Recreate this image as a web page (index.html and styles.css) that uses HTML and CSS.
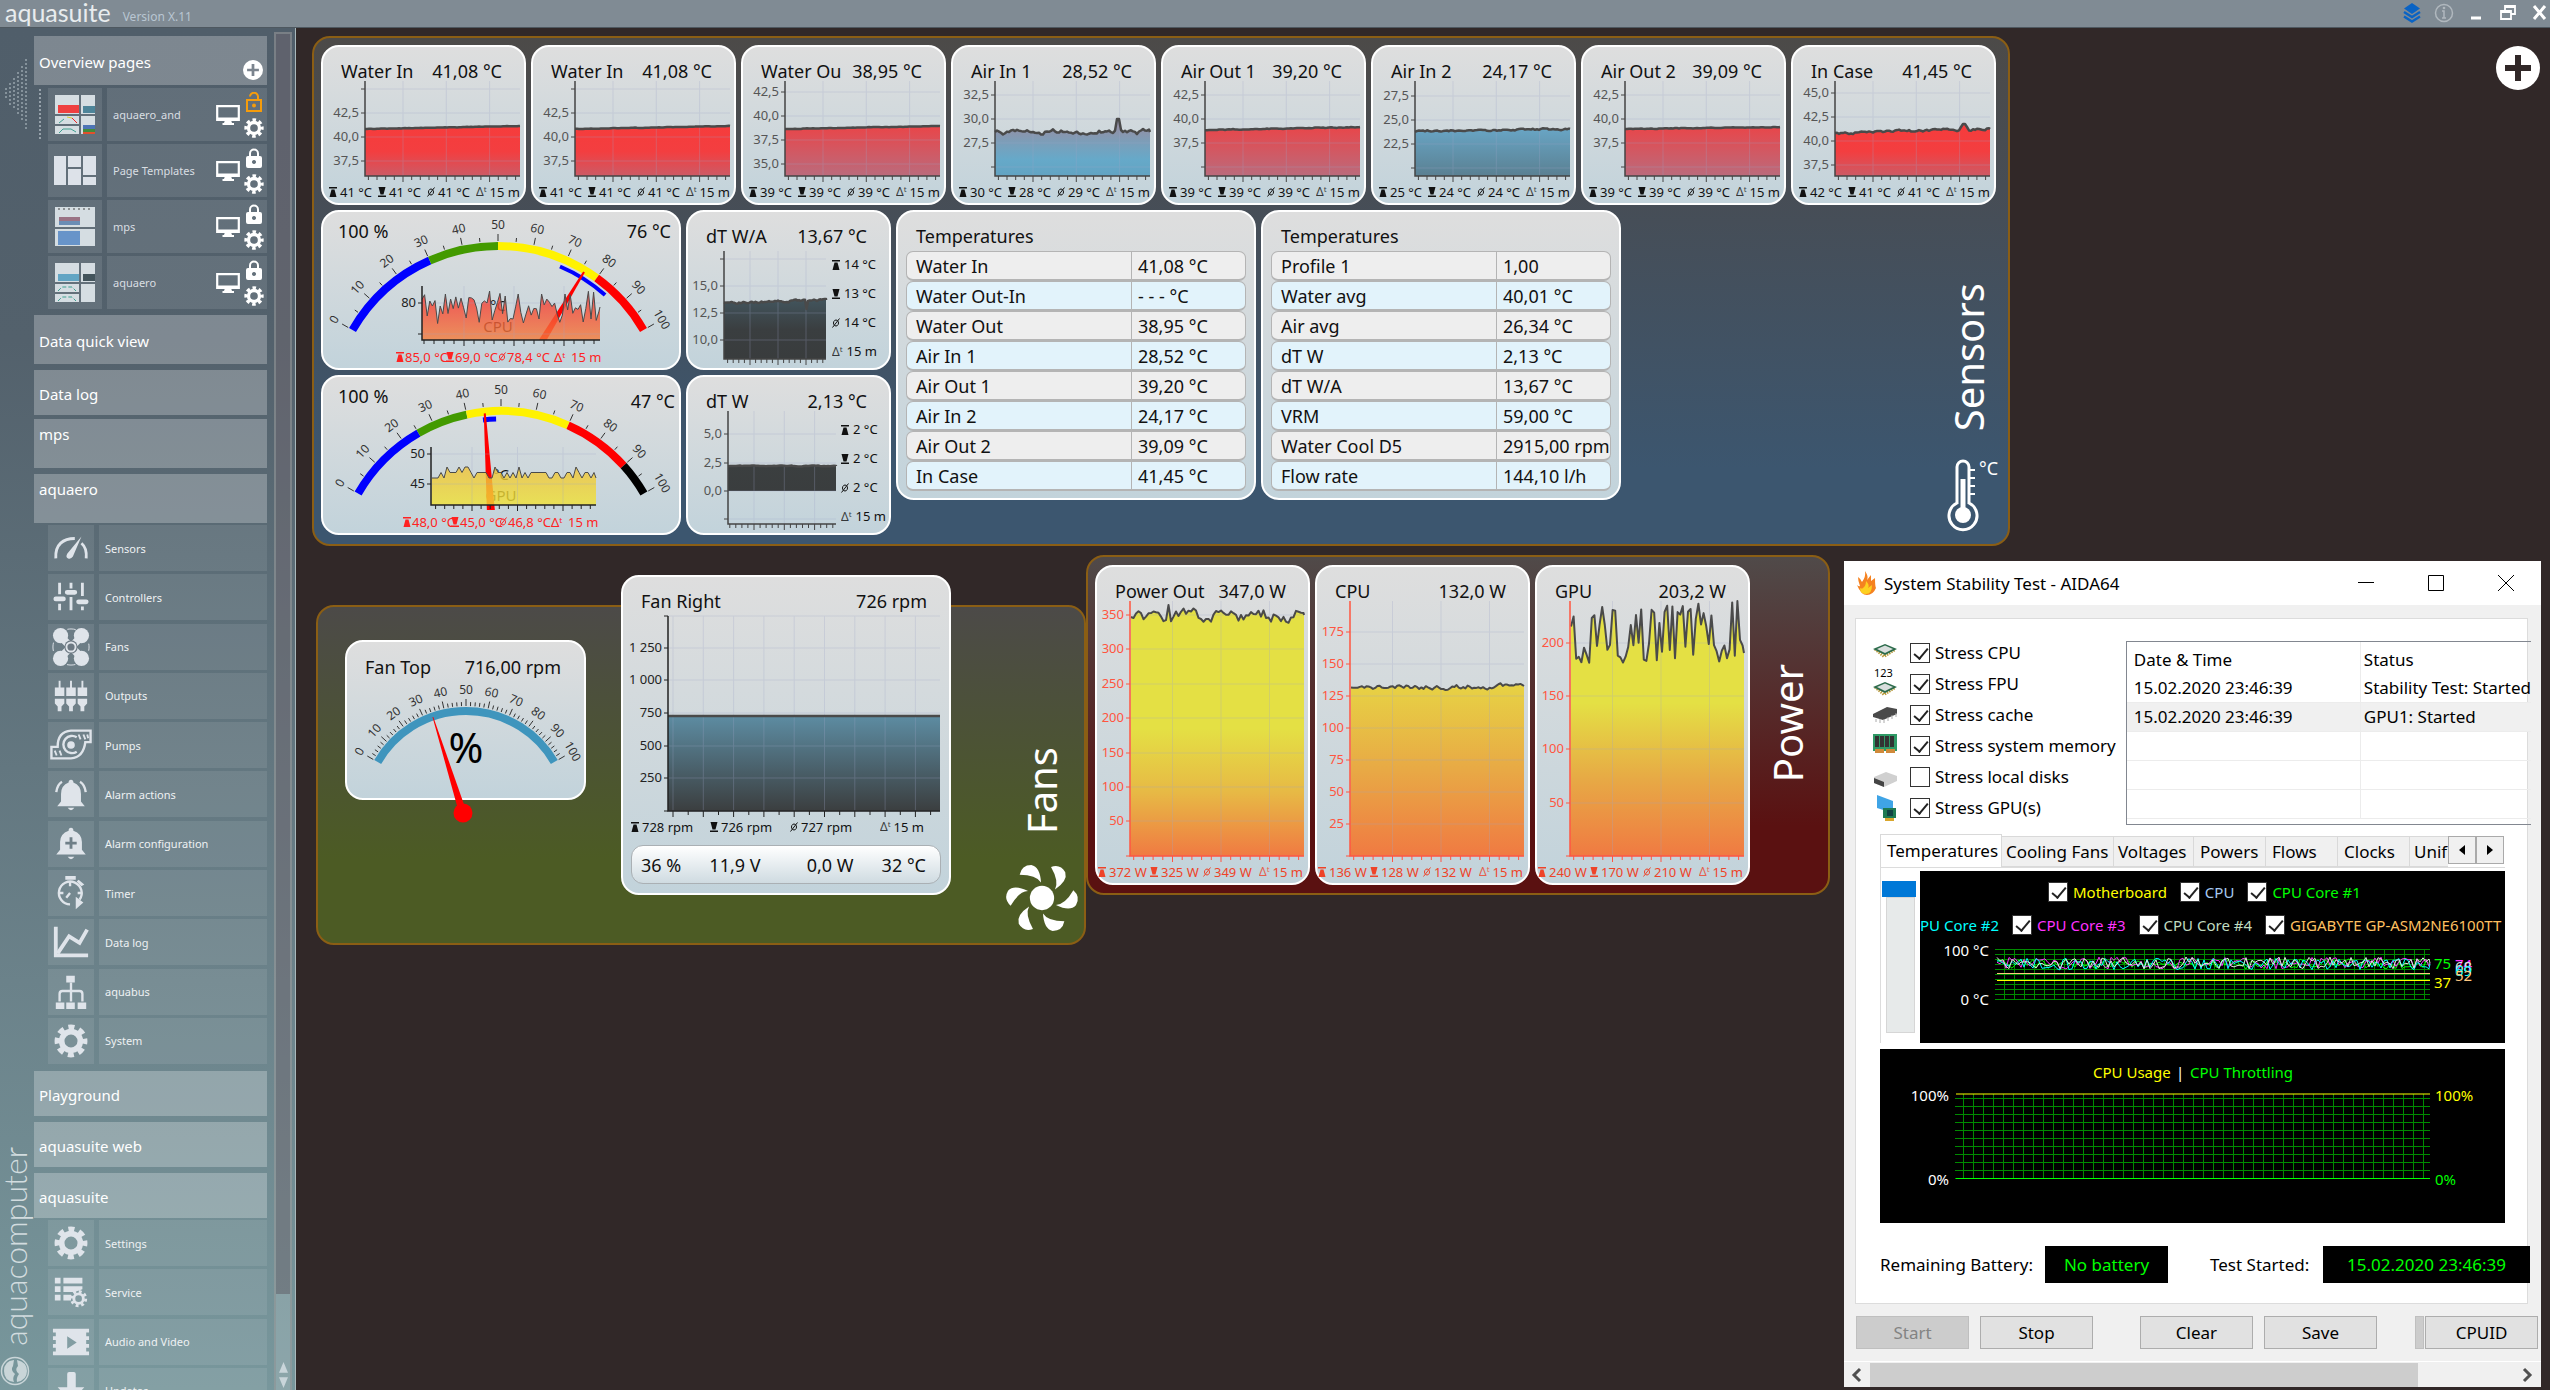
FILE: index.html
```html
<!DOCTYPE html>
<html lang="en">
<head>
<meta charset="utf-8">
<title>aquasuite</title>
<link rel="stylesheet" href="styles.css">
</head>
<body>
<svg class="defs" aria-hidden="true">
  <symbol id="i-gear" viewBox="-12 -12 24 24"><circle r="6.6" fill="none" stroke="currentColor" stroke-width="4"/><circle r="9.6" fill="none" stroke="currentColor" stroke-width="4" stroke-dasharray="4.2 3.34" stroke-dashoffset="2.1"/></symbol>
  <symbol id="i-plus" viewBox="0 0 44 44"><circle cx="22" cy="22" r="22" fill="#fff"/><path d="M22 9v26M9 22h26" stroke="var(--cut)" stroke-width="6"/></symbol>
  <symbol id="i-monitor" viewBox="0 0 24 20"><path d="M1.2 1.2h21.6v13.6H1.2z" fill="none" stroke="currentColor" stroke-width="2.2"/><path d="M2 12.5h20V15H2zM9 15h6l1 3h2v2H6.500v-2H8z" fill="currentColor"/></symbol>
  <symbol id="i-lock" viewBox="0 0 16 20"><path d="M4 9V5.500a4 4 0 0 1 8 0V9" fill="none" stroke="currentColor" stroke-width="2"/><path fill-rule="evenodd" d="M2 8h12q2 0 2 2v8q0 2-2 2H2q-2 0-2-2v-8q0-2 2-2zm6 4a2 2 0 1 0 .01 0z" fill="currentColor"/></symbol>
  <symbol id="i-unlock" viewBox="0 0 16 20"><path d="M4 4.500a4 4 0 0 1 8 .5V8M1 8h14v11H1z" fill="none" stroke="currentColor" stroke-width="2"/><circle cx="8" cy="13.500" r="2" fill="currentColor"/></symbol>
  <symbol id="i-gauge" viewBox="0 0 40 40"><g fill="none" stroke="currentColor" stroke-width="3"><path d="M4 31C3 16 12 10 24 10"/><path d="M31 15q6 5 5 16"/></g><path d="M31 8L22 29q-2 3-5 2t-1-5z" fill="currentColor"/></symbol>
  <symbol id="i-sliders" viewBox="0 0 40 40"><path d="M8 5v12M8 27v7M20 5v6M20 20v14M32 5v14M32 30v4" stroke="currentColor" stroke-width="3"/><path d="M4 22h8M16 15h8M28 25h8" stroke="currentColor" stroke-width="5" stroke-linecap="round"/></symbol>
  <symbol id="i-fan4" viewBox="-20 -20 40 40"><g fill="currentColor"><circle cx="-11" cy="-12" r="8"/><circle cx="11" cy="-12" r="8"/><circle cx="-11" cy="12" r="8"/><circle cx="11" cy="12" r="8"/></g><path d="M-12 -12L12 12M12 -12L-12 12" stroke="currentColor" stroke-width="8"/><circle r="7" fill="#6c7882"/><circle r="4.800" fill="none" stroke="currentColor" stroke-width="2"/><circle r="19" fill="none" stroke="currentColor" stroke-width="1" stroke-dasharray="9 21" stroke-dashoffset="5"/></symbol>
  <symbol id="i-outputs" viewBox="0 0 40 40"><path fill="currentColor" d="M7 4h2v7h4v9H3v-9h4zM3 23h10v5l-3 3v5H6v-5l-3-3zM19 4h2v7h4v9H15v-9h4zM15 23h10v5l-3 3v5h-4v-5l-3-3zM31 4h2v7h4v9H27v-9h4zM27 23h10v5l-3 3v5h-4v-5l-3-3z"/></symbol>
  <symbol id="i-pump" viewBox="0 0 44 34"><g fill="none" stroke="currentColor" stroke-width="2.500"><path d="M42.500 2H22Q8 3 8 19H1.500v12H22q13-1 15-17h5.500z"/><path d="M28 24a9 9 0 1 1 0-15"/></g><circle cx="22" cy="17" r="4" fill="currentColor"/><path d="M30 6l2 5M35 6l2 5M39 6l1 4M5 23l2 5M10 23l2 5" stroke="currentColor" stroke-width="2"/></symbol>
  <symbol id="i-bell" viewBox="0 0 40 40"><path fill="currentColor" d="M20 5q2.500 0 2.500 3 8 3 8 12v8l4 5H5.500l4-5v-8q0-9 8-12 0-3 2.500-3zM16.500 34.500h7q-3.500 5-7 0z"/><path d="M4.500 18q1-8 6-11M35.500 18q-1-8-6-11" fill="none" stroke="currentColor" stroke-width="2.500"/></symbol>
  <symbol id="i-bellplus" viewBox="0 0 40 40"><path fill="currentColor" d="M20 3q2.500 0 2.500 3 9 3 9 12v8l4 5h-31l4-5v-8q0-9 9-12 0-3 2.500-3zM16.500 33.500h7q-3.500 5-7 0z"/><path d="M20 13v12M14 19h12" stroke="#6f7f88" stroke-width="3"/></symbol>
  <symbol id="i-timer" viewBox="0 0 40 40"><g fill="none" stroke="currentColor" stroke-width="2.500"><path d="M29 27a12 12 0 1 0-10 5"/><path d="M19 8v5M8 20h4M27 20h4M19 20l-4 5"/></g><path fill="currentColor" d="M14 2h11v4H14zM28 6l6 5-3 2-5-5zM25 24l8 6-8 7z"/></symbol>
  <symbol id="i-log" viewBox="0 0 40 40"><path d="M4 4v30h34" fill="none" stroke="currentColor" stroke-width="4"/><path d="M6 32l12-18 11 7 8-14" fill="none" stroke="currentColor" stroke-width="4"/></symbol>
  <symbol id="i-bus" viewBox="0 0 40 40"><path fill="currentColor" d="M15 3h9v7h-9zM4 31h9v7H4zM15 31h9v7h-9zM27 31h9v7h-9z"/><path d="M20 10v20M8 30v-8q0-3 3-3h18q3 0 3 3v8" fill="none" stroke="currentColor" stroke-width="2.500"/></symbol>
  <symbol id="i-service" viewBox="0 0 40 40"><path fill="currentColor" d="M3 5h6v6H3zM12 5h20v6H12zM3 14h6v6H3zM12 14h20v3l-8 3H12zM3 23h6v6H3zM12 23h8v6h-8z"/><circle cx="28" cy="27" r="5" fill="none" stroke="currentColor" stroke-width="3"/><circle cx="28" cy="27" r="7.500" fill="none" stroke="currentColor" stroke-width="3" stroke-dasharray="3 2.890"/></symbol>
  <symbol id="i-video" viewBox="0 0 40 30"><path fill="currentColor" fill-rule="evenodd" d="M1 1h38v4h-3v4h3v4h-3v4h3v4h-3v4h3v4H1v-4h3v-4H1v-4h3v-4H1V9h3V5H1zm15 8v13l10-6.500z"/></symbol>
  <symbol id="i-down" viewBox="0 0 40 40"><path fill="currentColor" d="M16 2q0-2 2-2h5q2 0 2 2v14h9L20 32 6 16h10z"/></symbol>
  <symbol id="i-tpl" viewBox="0 0 42 30"><path fill="currentColor" d="M0 0h12v29H0zM14 0h13v11H14zM14 13h13v16H14zM29 0h13v19H29zM29 21h13v8H29z"/></symbol>
  <symbol id="i-chip" viewBox="0 0 24 14"><path d="M2 5l9 7.500 11-7" fill="none" stroke="#b99a3c" stroke-width="3" stroke-dasharray="1.500 1"/><path d="M0 5l12-5 12 5-12 6z" fill="#2c6b4b"/><path d="M4 5l8-3.500L20 5l-8 4z" fill="#d9dedd"/></symbol>
</svg>

<header class="topbar">
  <span class="brand">aquasuite</span><span class="version">Version X.11</span>
  <div class="topbar-tools">
    <button aria-label="Layers"><svg viewBox="0 0 20 20"><path fill="#0a63c4" d="M10 0l8 5.500-8 5.500-8-5.500z"/><path d="M2 9l8 5 8-5M2 13.500l8 5 8-5" fill="none" stroke="#0a63c4" stroke-width="2.400"/></svg></button>
    <button aria-label="Information"><svg viewBox="0 0 20 20"><g fill="none" stroke="#b0b8be" stroke-width="1.500"><circle cx="10" cy="10" r="8.500"/><path d="M8 8h2v7M8 15h4"/></g><circle cx="10" cy="5" r="1.300" fill="#b0b8be"/></svg></button>
    <button aria-label="Minimize"><svg viewBox="0 0 20 20"><path d="M5 15h10" stroke="#fff" stroke-width="3"/></svg></button>
    <button aria-label="Restore"><svg viewBox="0 0 20 20"><path d="M7 7V3h10v8h-4M3 8h10v8H3zM3 9h10M7 4h10" fill="none" stroke="#fff" stroke-width="1.800"/></svg></button>
    <button aria-label="Close"><svg viewBox="0 0 20 20"><path d="M4 3l11 13M15 3L4 16" stroke="#fff" stroke-width="3"/></svg></button>
  </div>
</header>

<div class="shell">
  <aside class="sidebar">
    <div class="rail">
      <svg class="rail-dots" viewBox="0 0 24 72"><path d="M22 1v70M18 8v56M14 14v44M10 20v32M6 25v22M2 30v12" stroke="#85929b" stroke-width="2" stroke-dasharray="2 2"/></svg>
      <div class="rail-logo"><span>aquacomputer</span>
        <svg viewBox="0 0 30 30"><circle cx="15" cy="15" r="13.500" fill="none" stroke="#c9d5d8" stroke-width="1.500"/><path fill="#c9d5d8" d="M14 4Q4 5 4 15t10 11q-2-4 1-8-5-4-2-8zM17 4q10 2 10 11t-10 11q-1-4 2-8-5-4-1-8z"/></svg>
      </div>
    </div>
    <nav class="menu">
      <div class="head head-add"><a href="#overview">Overview pages</a><button aria-label="Add page"><svg><use href="#i-plus"/></svg></button></div>
      <ul class="pages">
        <li class="active"><a class="thumb" href="#p1" aria-label="Open aquaero_and"><svg viewBox="0 0 40 40"><path fill="#d5dde2" d="M0 0h24v19H0zM26 0h14v19H26zM0 21h24v8H0zM0 31h24v8H0zM26 21h14v18H26z"/><path fill="#ef4040" d="M3 10h21v8H3z"/><path fill="#4d8499" d="M28 11h12v7H28z"/><path fill="#4d74b5" d="M28 30h12v4H28z"/><path fill="#438a3c" d="M28 34h12v3H28z"/><path fill="#e2502c" d="M28 37h12v2H28z"/><path d="M4 28l5-4" stroke="#3f9f8f"/><path d="M12 22l5 1" stroke="#dccf33"/><path d="M17 23l5 5" stroke="#e22"/><path d="M4 38l4-4h8l5 3" fill="none" stroke="#3f9f8f"/></svg></a><div class="page"><a href="#p1">aquaero_and</a><button aria-label="Show on desktop"><svg class="mon"><use href="#i-monitor"/></svg></button><span class="duo"><button class="open" aria-label="Lock"><svg class="lock"><use href="#i-unlock"/></svg></button><button aria-label="Settings"><svg class="gear"><use href="#i-gear"/></svg></button></span></div></li>
        <li><a class="thumb" href="#p2" aria-label="Open Page Templates"><svg viewBox="0 0 40 30"><use href="#i-tpl" width="42" height="30" x="-1"/></svg></a><div class="page"><a href="#p2">Page Templates</a><button aria-label="Show on desktop"><svg class="mon"><use href="#i-monitor"/></svg></button><span class="duo"><button aria-label="Unlock"><svg class="lock"><use href="#i-lock"/></svg></button><button aria-label="Settings"><svg class="gear"><use href="#i-gear"/></svg></button></span></div></li>
        <li><a class="thumb" href="#p3" aria-label="Open mps"><svg viewBox="0 0 40 40"><path fill="#d5dde2" d="M0 0h40v20H0zM0 22h40v17H0z"/><path fill="#9a7385" d="M4 10h21v4H4z"/><path fill="#6a8db5" d="M4 14h21v4H4z"/><path fill="#6894c9" d="M3 24h22v14H3z"/><path d="M3 2h34" stroke="#444" stroke-dasharray="2 3"/></svg></a><div class="page"><a href="#p3">mps</a><button aria-label="Show on desktop"><svg class="mon"><use href="#i-monitor"/></svg></button><span class="duo"><button aria-label="Unlock"><svg class="lock"><use href="#i-lock"/></svg></button><button aria-label="Settings"><svg class="gear"><use href="#i-gear"/></svg></button></span></div></li>
        <li><a class="thumb" href="#p4" aria-label="Open aquaero"><svg viewBox="0 0 40 40"><path fill="#d5dde2" d="M0 0h24v19H0zM26 0h14v19H26zM0 21h24v8H0zM0 31h24v8H0zM26 21h14v18H26z"/><path fill="#62a5c4" d="M3 11h21v7H3z"/><path fill="#43545c" d="M28 11h12v7H28z"/><path d="M3 28l4-4h10l4 4M3 38l4-4h10l4 4" fill="none" stroke="#3f9f8f" stroke-dasharray="4 2"/></svg></a><div class="page"><a href="#p4">aquaero</a><button aria-label="Show on desktop"><svg class="mon"><use href="#i-monitor"/></svg></button><span class="duo"><button aria-label="Unlock"><svg class="lock"><use href="#i-lock"/></svg></button><button aria-label="Settings"><svg class="gear"><use href="#i-gear"/></svg></button></span></div></li>
      </ul>
      <a class="head tall" href="#quick">Data quick view</a>
      <a class="head" href="#log">Data log</a>
      <a class="head tall top near" href="#mps">mps</a>
      <a class="head tall top" href="#aquaero">aquaero</a>
      <ul class="subs eleven">
        <li><svg><use href="#i-gauge"/></svg><a href="#sensors">Sensors</a></li>
        <li><svg><use href="#i-sliders"/></svg><a href="#controllers">Controllers</a></li>
        <li><svg><use href="#i-fan4"/></svg><a href="#fans">Fans</a></li>
        <li><svg><use href="#i-outputs"/></svg><a href="#outputs">Outputs</a></li>
        <li><svg class="w"><use href="#i-pump"/></svg><a href="#pumps">Pumps</a></li>
        <li><svg><use href="#i-bell"/></svg><a href="#actions">Alarm actions</a></li>
        <li><svg><use href="#i-bellplus"/></svg><a href="#alarms">Alarm configuration</a></li>
        <li><svg><use href="#i-timer"/></svg><a href="#timer">Timer</a></li>
        <li><svg><use href="#i-log"/></svg><a href="#datalog">Data log</a></li>
        <li><svg><use href="#i-bus"/></svg><a href="#aquabus">aquabus</a></li>
        <li><svg class="g"><use href="#i-gear"/></svg><a href="#system">System</a></li>
      </ul>
      <a class="head far" href="#playground">Playground</a>
      <a class="head" href="#web">aquasuite web</a>
      <a class="head" href="#aquasuite">aquasuite</a>
      <ul class="subs four">
        <li><svg class="g"><use href="#i-gear"/></svg><a href="#settings">Settings</a></li>
        <li><svg><use href="#i-service"/></svg><a href="#service">Service</a></li>
        <li><svg><use href="#i-video"/></svg><a href="#av">Audio and Video</a></li>
        <li><svg><use href="#i-down"/></svg><a href="#updates">Updates</a></li>
      </ul>
    </nav>
    <div class="scroll"><div class="scroll-thumb"></div><svg viewBox="0 0 10 30"><path fill="#c9d5da" d="M5 0l5 12H0zM0 17h10L5 29z"/></svg></div>
  </aside>

  <main class="canvas">
    <button class="add" aria-label="Add element"><svg><use href="#i-plus"/></svg></button>

    <section class="group sensors">
      <div class="row" id="trends"></div>
      <div class="row">
        <div class="quad" id="quad"></div>
        <article class="card listcard">
          <h2>Temperatures</h2>
          <table>
            <tr><th>Water In</th><td>41,08 °C</td></tr>
            <tr><th>Water Out-In</th><td>- - - °C</td></tr>
            <tr><th>Water Out</th><td>38,95 °C</td></tr>
            <tr><th>Air In 1</th><td>28,52 °C</td></tr>
            <tr><th>Air Out 1</th><td>39,20 °C</td></tr>
            <tr><th>Air In 2</th><td>24,17 °C</td></tr>
            <tr><th>Air Out 2</th><td>39,09 °C</td></tr>
            <tr><th>In Case</th><td>41,45 °C</td></tr>
          </table>
        </article>
        <article class="card listcard">
          <h2>Temperatures</h2>
          <table>
            <tr><th>Profile 1</th><td>1,00</td></tr>
            <tr><th>Water avg</th><td>40,01 °C</td></tr>
            <tr><th>Air avg</th><td>26,34 °C</td></tr>
            <tr><th>dT W</th><td>2,13 °C</td></tr>
            <tr><th>dT W/A</th><td>13,67 °C</td></tr>
            <tr><th>VRM</th><td>59,00 °C</td></tr>
            <tr><th>Water Cool D5</th><td>2915,00 rpm</td></tr>
            <tr><th>Flow rate</th><td>144,10 l/h</td></tr>
          </table>
        </article>
        <div class="side">
          <h1>Sensors</h1>
          <svg class="thermo" viewBox="0 0 54 74"><path d="M13 46V10a6 6 0 0 1 12 0v36a14 14 0 1 1-12 0z" fill="none" stroke="#fff" stroke-width="3"/><circle cx="19" cy="58" r="8" fill="#fff"/><path d="M19 58V22" stroke="#fff" stroke-width="5"/><path d="M25 13h6M25 21h6M25 29h6M25 37h6" stroke="#fff" stroke-width="2"/><text x="35" y="18">°C</text></svg>
        </div>
      </div>
    </section>

    <section class="group fans">
      <div class="side">
        <h1>Fans</h1>
        <svg class="rotor" viewBox="-35 -35 70 70"><circle r="12.500" fill="#fff"/><g fill="#fff"><path id="blade" d="M-1-16q-5-8-22-8 2-10 12-10 9 2 10 18z"/><use href="#blade" transform="rotate(60)"/><use href="#blade" transform="rotate(120)"/><use href="#blade" transform="rotate(180)"/><use href="#blade" transform="rotate(240)"/><use href="#blade" transform="rotate(300)"/></g></svg>
      </div>
    </section>
    <article class="card fantop" id="fantop"></article>
    <article class="card fanright" id="fanright"></article>

    <section class="group power">
      <div class="row" id="power"></div>
      <div class="side"><h1>Power</h1></div>
    </section>

    <section class="aida" aria-label="System Stability Test">
      <div class="caption">
        <svg class="flame" viewBox="0 0 20 24"><path fill="#f58220" d="M8 0q4 6 2 9l4-5v6l4-3q0 8 1 10-3 7-9 7T0 14q2 2 3 1-2-5-2-9 3 2 4 5Q9 6 8 0z"/><path fill="#fdd020" d="M9 10q4 4 2 7l4-3q0 9-6 9t-6-6q2 1 3 0 3-2 3-7z"/></svg>
        <span>System Stability Test - AIDA64</span>
        <button aria-label="Minimize"><svg viewBox="0 0 16 16"><path d="M0 7.500h16" stroke="#000"/></svg></button>
        <button aria-label="Maximize"><svg viewBox="0 0 16 16"><path d="M.5.5h15v15H.5z" fill="none" stroke="#000"/></svg></button>
        <button aria-label="Close"><svg viewBox="0 0 16 16"><path d="M0 0l16 16M16 0L0 16" stroke="#000"/></svg></button>
      </div>
      <div class="panel">
        <div class="upper">
          <div class="checks">
            <label><svg viewBox="0 0 24 28"><use href="#i-chip" y="5" width="24" height="14"/></svg><input type="checkbox" checked>Stress CPU</label>
            <label><svg viewBox="0 0 24 28"><text x="1" y="7">123</text><use href="#i-chip" y="12" width="24" height="14"/></svg><input type="checkbox" checked>Stress FPU</label>
            <label><svg viewBox="0 0 24 28"><path fill="#4a4a4a" d="M0 13l14-7 10 2v5l-14 6-10-3z"/><path d="M3 18v3M7 18v4M11 18v4M15 16v4M19 14v4M23 12v4" stroke="#aaa"/></svg><input type="checkbox" checked>Stress cache</label>
            <label><svg viewBox="0 0 24 28"><path fill="#2f9a66" d="M0 2h24v17H0z"/><path fill="#333" d="M2 4h4v11H2zM7 4h4v11H7zM12 4h4v11h-4zM17 4h4v11h-4z"/><path fill="#d08a3a" d="M2 17h9v4H2zM13 17h9v4h-9z"/></svg><input type="checkbox" checked>Stress system memory</label>
            <label><svg viewBox="0 0 24 28"><path fill="#d0d0d0" d="M1 14l12-5 11 4v5l-13 6-10-4z"/><path fill="#444" d="M1 15l10 4v5L1 20z"/></svg><input type="checkbox">Stress local disks</label>
            <label><svg viewBox="0 0 24 28"><path fill="#3fa4e6" d="M4 1l16 6v12L4 14z"/><path fill="#1e7a52" d="M10 14h13v10H10z"/><path fill="#144" d="M14 16h6v6h-6z"/><path fill="#d9a62c" d="M12 24h9v3h-9z"/></svg><input type="checkbox" checked>Stress GPU(s)</label>
          </div>
          <div class="events"><table>
            <tr><th>Date &amp; Time</th><th>Status</th></tr>
            <tr><td>15.02.2020 23:46:39</td><td>Stability Test: Started</td></tr>
            <tr class="sel"><td>15.02.2020 23:46:39</td><td>GPU1: Started</td></tr>
            <tr><td></td><td></td></tr><tr><td></td><td></td></tr><tr><td></td><td></td></tr>
          </table></div>
        </div>
        <div class="tabs">
          <button class="on">Temperatures</button><button>Cooling Fans</button><button>Voltages</button><button>Powers</button><button>Flows</button><button>Clocks</button><button class="cut">Unif</button><button class="arrow" aria-label="Scroll left"><svg viewBox="0 0 6 10"><path d="M6 0v10L0 5z"/></svg></button><button class="arrow" aria-label="Scroll right"><svg viewBox="0 0 6 10"><path d="M0 0v10l6-5z"/></svg></button>
        </div>
        <div class="pane">
          <div class="slider"><div class="knob"></div></div>
          <div class="screen">
            <div class="legend one"><label class="c-y"><input type="checkbox" checked>Motherboard</label><label class="c-b"><input type="checkbox" checked>CPU</label><label class="c-g"><input type="checkbox" checked>CPU Core #1</label></div>
            <div class="legend two"><span class="c-c">PU Core #2</span><label class="c-m"><input type="checkbox" checked>CPU Core #3</label><label class="c-w"><input type="checkbox" checked>CPU Core #4</label><label class="c-o"><input type="checkbox" checked>GIGABYTE GP-ASM2NE6100TT</label></div>
            <svg class="scope" id="temps" viewBox="0 0 585 103"></svg>
          </div>
        </div>
        <svg class="usage" id="usage" viewBox="0 0 625 174"></svg>
        <div class="status"><span>Remaining Battery:</span><output class="bat">No battery</output><span>Test Started:</span><output class="time">15.02.2020 23:46:39</output></div>
      </div>
      <div class="actions"><button disabled>Start</button><button>Stop</button><button class="gap">Clear</button><button>Save</button><i></i><button>CPUID</button></div>
      <div class="hscroll"><svg viewBox="0 0 10 14"><path d="M8 1L2 7l6 6" /></svg><div></div><svg viewBox="0 0 10 14"><path d="M2 1l6 6-6 6"/></svg></div>
    </section>
  </main>
</div>
<script src="app.js"></script>
</body>
</html>
```
FILE: styles.css
```css
* { box-sizing: border-box; }
body { margin: 0; height: 100vh; display: flex; flex-direction: column; overflow: hidden; background: #312828; font-family: "Noto Sans", "Open Sans", sans-serif; font-size: 18px; color: #111; }
button { border: 0; padding: 0; background: none; font: inherit; color: inherit; display: block; }
a { color: inherit; text-decoration: none; }
ul { list-style: none; margin: 0; padding: 0; }
h1, h2 { margin: 0; font-weight: 400; }
svg { display: block; overflow: visible; }
.defs { position: absolute; width: 0; height: 0; }

.topbar { flex: none; height: 28px; background: #808b94; border-bottom: 1px solid #4e5860; display: flex; align-items: center; padding: 0 0 0 5px; }
.brand { font-family: Lato, sans-serif; font-size: 25px; line-height: 26px; margin-bottom: 4px; color: #e8ecee; }
.version { font-size: 12px; color: #b9c6d2; margin: 5px 0 0 12px; }
.topbar-tools { margin-left: auto; display: flex; gap: 12px; padding-bottom: 2px; }
.topbar-tools svg { width: 20px; height: 20px; }

.shell { flex: 1; min-height: 0; display: flex; }
.sidebar { flex: none; width: 296px; display: flex; overflow: hidden; background: linear-gradient(#505e6a 0, #53616c 23%, #6b828a 70%, #78979c 100%); border-right: 1px solid #a9b8bb; padding-right: 3px; color: #fff; }
.rail { width: 34px; display: flex; flex-direction: column; justify-content: space-between; padding: 30px 0 4px 4px; }
.rail-dots { width: 24px; height: 72px; }
.rail-logo { display: flex; flex-direction: column; align-items: center; gap: 10px; width: 30px; margin-left: -4px; color: #d2dcdf; }
.rail-logo span { writing-mode: vertical-rl; transform: rotate(180deg); font: 32px/30px Lato, sans-serif; font-weight: 300; }
.rail-logo svg { width: 30px; height: 30px; }
.menu { width: 233px; padding-top: 8px; font-size: 15px; }
.head { display: flex; align-items: center; height: 45px; margin-top: 6px; padding: 2px 4px 0 5px; line-height: 20px; background: rgba(255, 255, 255, .26); }
.head.tall, .head-add { height: 49px; }
.head.top { align-items: flex-start; padding-top: 5px; }
.head.near { margin-top: 4px; }
.head.far { margin-top: 7px; }
.head-add { margin-top: 0; justify-content: space-between; }
.head-add button { align-self: flex-end; margin-bottom: 5px; --cut: #7b848e; }
.head-add svg { width: 20px; height: 20px; }
.pages { display: grid; gap: 3px; padding: 3px 0 0 14px; }
.pages li { display: flex; gap: 5px; height: 53px; font-size: 11px; color: #d9dee2; }
.pages .active { margin-left: -10px; }
.active::before { content: ""; width: 5px; background: radial-gradient(circle, #96a1aa 1px, transparent 1px) 0 0 / 4px 4px; }
.thumb { width: 54px; flex: none; background: rgba(255, 255, 255, .1); display: grid; place-items: center; color: #dde2e9; }
.thumb svg { width: 40px; }
.page { flex: 1; background: rgba(255, 255, 255, .1); display: flex; align-items: center; padding: 0 3px 0 6px; }
.page a { flex: 1; }
.page button { color: #fff; }
.page .open { color: #f59c0b; }
.mon { width: 24px; height: 20px; }
.duo { display: grid; gap: 6px; justify-items: center; margin-left: 4px; }
.lock { width: 16px; height: 20px; }
.gear { width: 20px; height: 20px; }
.subs { display: flex; flex-direction: column; justify-content: space-between; padding-left: 14px; margin-top: 2px; font-size: 11px; }
.eleven { height: 539px; }
.four { height: 194px; }
.subs li { display: flex; gap: 5px; height: 46px; }
.subs li svg { width: 46px; height: 46px; padding: 4px; background: rgba(255, 255, 255, .09); color: #dfe4ea; }
.subs li .g { padding: 6px; }
.subs li .w { padding: 2px; }
.subs a { flex: 1; display: flex; align-items: center; padding-left: 6px; color: #eef1f3; background: rgba(255, 255, 255, .09); }
.scroll { margin: 4px 0 0 7px; width: 18px; border: 2px solid rgba(140, 140, 140, .45); border-bottom: 0; background: rgba(255, 255, 255, .15); display: flex; flex-direction: column; justify-content: space-between; align-items: center; }
.scroll-thumb { width: 14px; height: 1260px; max-height: 93%; background: rgba(80, 70, 80, .4); }
.scroll svg { width: 9px; height: 29px; }

.canvas { flex: 1; position: relative; overflow: hidden; }
.add { position: absolute; right: 10px; top: 18px; --cut: #312828; }
.add svg { width: 44px; height: 44px; }
.group { position: absolute; border: 2px solid #8b5e14; border-radius: 18px; padding: 7px; display: flex; }
.sensors { left: 16px; top: 8px; width: 1698px; height: 510px; flex-direction: column; gap: 5px; background: linear-gradient(#4c4a48 0, #474d55 30%, #3c566f 85%); }
.row { display: flex; gap: 5px; }
.card { position: relative; flex: none; border: 2px solid #fff; border-radius: 18px; background: linear-gradient(#dedede, #c2d3db); }
.side { margin-left: auto; display: flex; flex-direction: column; align-items: flex-start; justify-content: flex-end; color: #fff; }
.sensors .side { padding: 0 3px 4px 0; }
.side h1 { writing-mode: vertical-rl; transform: rotate(180deg); font-size: 40px; line-height: 50px; }
.side .thermo { width: 54px; height: 74px; margin-top: 26px; }
.thermo text { font-size: 18px; fill: #fff; }
.rotor { width: 70px; height: 68px; margin-top: 30px; }
.fans { left: 20px; top: 577px; width: 770px; height: 340px; background: linear-gradient(#4c4a48, #4c5b24 75%); padding-bottom: 11px; }
.fans .side { align-items: center; }
.power { left: 790px; top: 527px; width: 744px; height: 340px; padding-top: 8px; background: linear-gradient(#504a49, #5a1111 80%); }
.power .side { justify-content: center; padding: 0 8px 4px 0; }
.fantop { position: absolute; left: 49px; top: 612px; width: 241px; height: 160px; }
.fanright { position: absolute; left: 325px; top: 547px; width: 330px; height: 320px; }

.card header { display: flex; justify-content: space-between; padding: 11px 22px 1px 18px; line-height: 26px; white-space: nowrap; }
.card .stats { display: grid; grid-template-columns: 49px 49px 49px auto; padding-left: 6px; height: 18px; font-size: 13px; line-height: 18px; white-space: nowrap; }
.stat { display: flex; align-items: center; gap: 3px; }
.stat svg { width: 8px; height: 10px; }
.stat i { font-style: normal; font-size: 12px; opacity: .8; }
.small { width: 205px; height: 160px; }
.tall-card { width: 215px; height: 320px; }
.tall-card .stats { grid-template-columns: 52px 53px 56px auto; padding-left: 1px; color: #ee4328; }
.fanright .stats { grid-template-columns: 79px 80px 90px auto; padding-left: 8px; }
.fanright header { padding-right: 22px; }
.split { display: flex; }
.split .stats { grid-template: repeat(4, 29px) / auto; height: 116px; padding-left: 5px; line-height: 29px; }
.split .stat { gap: 4px; }
.quad { display: grid; grid-template-columns: 360px 205px; gap: 5px; align-content: start; }
.quad .card { height: 160px; }
.readout { display: flex; justify-content: space-between; margin: 9px 8px 0; height: 39px; padding: 0 14px 0 9px; line-height: 39px; border: 1px solid #aab0b4; border-radius: 12px; background: linear-gradient(#fff, #cfdbe1); }
.readout span:nth-child(2) { margin-right: 18px; }
.axis { font-size: 13px; fill: #555; }
.tick { font-size: 12px; fill: #333; }
.big { font-size: 18px; fill: #111; }
.unit { font-size: 15px; fill: #111; }
.huge { font-size: 42px; fill: #000; }
.gstat { font-size: 13px; fill: #f22; }

.listcard { width: 360px; height: 290px; padding: 10px 8px; }
.listcard h2 { font-size: 18px; line-height: 29px; padding-left: 10px; }
.listcard table { width: 340px; border-collapse: separate; border-spacing: 0; table-layout: fixed; }
.listcard tr { height: 30px; }
.listcard th, .listcard td { padding: 0 0 0 9px; font-weight: 400; text-align: left; line-height: 26px; border: 1px solid #b4b4b4; border-bottom-width: 2px; background: #eee; white-space: nowrap; overflow: hidden; }
.listcard th { width: 226px; border-radius: 7px 0 0 7px; }
.listcard td { padding-left: 6px; border-left: 0; border-radius: 0 7px 7px 0; }
.listcard tr:nth-child(even) > * { background: #e2f3fb; }

.aida { position: absolute; right: 9px; top: 533px; width: 697px; background: #f0f0f0; font-size: 17px; color: #000; overflow: hidden; }
.caption { height: 44px; background: #fff; display: flex; align-items: center; padding: 0 27px 0 13px; }
.caption span { flex: 1; margin-left: 7px; }
.flame { width: 20px; height: 24px; }
.caption button { margin-left: 54px; }
.caption button svg { width: 16px; height: 16px; }
.panel { margin: 13px 13px 0 11px; height: 686px; border: 1px solid #dcdcdc; background: #fff; padding: 18px 0 0 24px; }
.upper { display: flex; gap: 10px; margin-left: -7px; }
.checks { width: 243px; white-space: nowrap; }
.checks label { display: flex; align-items: center; height: 31px; }
.checks label svg { width: 24px; height: 28px; margin-right: 13px; }
.checks text { font-size: 11px; }
input[type=checkbox] { appearance: none; position: relative; flex: none; width: 20px; height: 20px; margin: 0 5px 0 0; border: 1px solid #333; background: #fff; }
input[type=checkbox]:checked::after { content: ""; position: absolute; left: 6px; top: 1px; width: 6px; height: 12px; border: solid #222; border-width: 0 2px 2px 0; transform: rotate(40deg); }
.events { flex: none; width: 405px; height: 184px; margin-top: 4px; border: 1px solid #828790; border-right: 0; overflow: hidden; }
.events table { width: 404px; table-layout: fixed; border-spacing: 0; }
.events th, .events td { height: 29px; padding: 0 0 0 3px; text-align: left; font-weight: 400; line-height: 28px; border-bottom: 1px solid #ececec; border-left: 1px solid #ececec; white-space: nowrap; }
.events th { height: 32px; padding-top: 3px; border-bottom: 0; }
.events :is(th, td):first-child { width: 233px; border-left: 0; padding-left: 7px; }
.sel td { background: #f0f0f0; }
.tabs { display: flex; align-items: flex-end; height: 33px; margin-top: 9px; }
.tabs button { height: 31px; line-height: 30px; padding: 0 6px; background: #f0f0f0; border: 1px solid #d9d9d9; border-width: 1px 1px 1px 0; width: 72px; text-align: left; white-space: nowrap; }
.tabs button.on { height: 33px; width: 122px; background: #fff; border-width: 1px 1px 0; }
.tabs button:nth-child(2) { width: 112px; padding: 0 4px; }
.tabs button:nth-child(3) { width: 80px; padding: 0 4px; }
.tabs button.cut { width: 38px; padding: 0 0 0 4px; border-right: 0; }
.tabs button.arrow { width: 28px; height: 28px; margin-bottom: 3px; border: 1px solid #aaa; padding: 0 10px; }
.arrow svg { width: 6px; height: 10px; }
.pane { display: flex; gap: 6px; height: 176px; width: 625px; padding-top: 3px; border-left: 1px solid #dcdcdc; border-top: 1px solid #dcdcdc; }
.slider { width: 33px; padding: 10px 0 0 1px; }
.slider::after { content: ""; display: block; width: 27px; height: 134px; margin-left: 4px; background: #e7eaea; border: 1px solid #d6d6d6; }
.knob { height: 16px; width: 34px; background: #0078d7; }
.screen { flex: 1; background: #000; overflow: hidden; font-size: 15px; }
.legend { display: flex; align-items: center; white-space: nowrap; }
.legend label { display: flex; align-items: center; }
.one { height: 42px; gap: 13px; padding-left: 128px; }
.two { height: 24px; gap: 13px; margin-bottom: 4px; }
.scope { width: 585px; height: 103px; }
.c-y { color: #ff0; } .c-b { color: #a6caf0; } .c-g { color: #0f0; } .c-c { color: #0ff; } .c-m { color: #f3f; } .c-w { color: #c0dcc0; } .c-o { color: #ffc060; }
.scope text, .usage text { font-size: 15px; }
.usage { width: 625px; height: 174px; margin-top: 6px; background: #000; }
.status { display: flex; align-items: center; height: 37px; margin-top: 23px; line-height: 37px; white-space: nowrap; font-size: 17px; }
.status span { flex: none; }
.status span:first-child { width: 165px; }
.status span:nth-of-type(2) { margin-left: 42px; width: 113px; }
.status output { background: #000; color: #0f0; text-align: center; height: 37px; flex: none; }
.bat { width: 123px; }
.time { width: 207px; }
.actions { display: flex; gap: 11px; margin: 12px 0 0 12px; }
.actions button { width: 113px; height: 33px; background: #e1e1e1; border: 1px solid #adadad; }
.actions button:disabled { background: #ccc; border-color: #bfbfbf; color: #838383; }
.actions .gap { margin-left: 36px; }
.actions i { width: 9px; margin: 0 -10px 0 27px; background: #ccc; border: 1px solid #bfbfbf; }
.hscroll { margin-top: 12px; height: 26px; border-top: 1px solid #fff; display: flex; align-items: center; justify-content: space-between; padding: 0 9px 0 8px; }
.hscroll div { width: 548px; height: 24px; margin: 0 auto 0 8px; background: #cdcdcd; }
.hscroll svg { width: 10px; height: 14px; fill: none; stroke: #505050; stroke-width: 3; }
```
FILE: app.js
```js
// Draws the widgets of the overview page. All coordinates are card pixels.
const $ = id => document.getElementById(id);
let uid = 0;

function rng(seed) {
  return () => (seed = (seed * 16807) % 2147483647) / 2147483647;
}

// Trend with noise: from y0 to y1, amplitude amp, spikes as [x, y]; soft trends carry over part of the last step
function series(x0, x1, y0, y1, amp, seed, step, spikes = [], soft = .55) {
  const r = rng(seed), pts = [];
  let n = 0;
  for (let i = 0; i < 5; i++) r();
  for (let x = x0; x <= x1; x += step) {
    const t = (x - x0) / (x1 - x0);
    n = n * soft + (r() - .5) * 2 * amp * (1 - soft * .3);
    let y = y0 + (y1 - y0) * t + n;
    for (const [sx, sy] of spikes) if (Math.abs(sx - x) < step * .6) y = sy;
    pts.push([x, y]);
  }
  pts.push([x1, y1]);
  return pts;
}

function plot(c) {
  const id = 'g' + uid++, col = c.color || '#444', tcol = c.color || '#555', base = c.base || c.bottom;
  let s = `<defs><linearGradient id="${id}" gradientUnits="userSpaceOnUse" x1="0" x2="0" y1="${c.g[0]}" y2="${c.g[1]}">` +
    c.fill.map((f, i) => `<stop offset="${i / (c.fill.length - 1)}" stop-color="${f}"/>`).join('') + '</linearGradient></defs>';
  const majors = [];
  for (let k = 0; k < (c.n || 3); k++) majors.push(c.mx + k * c.step);
  const d = c.pts.map(p => p.map(v => v.toFixed(1)).join(' ')).join('L');
  s += `<path d="M${c.x0} ${base}L${d}L${c.x1} ${base}z" fill="url(#${id})" opacity="${c.alpha || 1}"/>`;
  s += `<g stroke="#9fa6c8" opacity=".28">` + majors.map(x => `<path d="M${x} ${c.top}V${c.bottom}"/>`).join('') +
    c.y.map(a => `<path d="M${c.x0} ${a[0]}H${c.x1}"/>`).join('') + '</g>';
  s += `<path d="M${d}" fill="none" stroke="#4a4a4a" stroke-width="${c.w || 2.5}" stroke-linejoin="round"/>`;
  s += `<path d="M${c.x0} ${c.top}V${c.bottom}H${c.x1}" fill="none" stroke="${col}" stroke-width="1.5"/>`;
  const sub = c.sub || 5, m = c.step / sub;
  let t = '';
  for (let x = c.mx - Math.floor((c.mx - c.x0) / m) * m, i = -Math.floor((c.mx - c.x0) / m); x <= c.x1; x += m, i++)
    t += `M${x.toFixed(1)} ${c.bottom}v${i % sub ? 4 : 6}`;
  c.y.forEach(a => t += `M${c.x0} ${a[0]}h-4`);
  s += `<path d="${t}" stroke="${col}" fill="none"/>`;
  c.y.forEach(a => { if (a[1]) s += `<text class="axis" x="${c.x0 - 6}" y="${a[0] + 4}" text-anchor="end" style="fill:${tcol}">${a[1]}</text>`; });
  return s;
}

const UP = '<path fill="currentColor" d="M0 0h8v1.600H0zM2.500 2.600h3L7.500 10h-7z"/>';
const DN = '<path fill="currentColor" d="M0 8.400h8V10H0zM.5 0h7l-2 7.400h-3z"/>';
const AV = '<path fill="none" stroke="currentColor" d="M4 2a2.500 3 0 1 0 .01 0M0.500 9.500L7.500.5"/>';
const icon = p => `<svg viewBox="0 0 8 10">${p}</svg>`;

function stats(a) {
  return `<div class="stats"><span class="stat">${icon(UP)}${a[0]}</span><span class="stat">${icon(DN)}${a[1]}</span>` +
    `<span class="stat">${icon(AV)}${a[2]}</span><span class="stat"><i>Δᵗ</i>15 m</span></div>`;
}
const head = (a, b) => `<header><span>${a}</span><span>${b}</span></header>`;
const svg = (x, y, w, h, s) => `<svg width="${w}" height="${h}" viewBox="${x} ${y} ${w} ${h}">${s}</svg>`;

const RED = ['#f63c3c', '#f33e40', '#cc5b66'], ROSE = ['#e8464a', '#bb6b7c'], SKY = ['#9390a6', '#7a9fba', '#66a9c9', '#62a3c2'], SEA = ['#69a6c6', '#5a8092'];
const trends = [
  ['Water In', '41,08 °C', 44, [0, '42,5', '40,0', '37,5'], 84, 81, .2, RED, ['41 °C', '41 °C', '41 °C']],
  ['Water In', '41,08 °C', 44, [0, '42,5', '40,0', '37,5'], 84, 81, .2, RED, ['41 °C', '41 °C', '41 °C']],
  ['Water Ou', '38,95 °C', 47, ['42,5', '40,0', '37,5', '35,0'], 84, 81, .2, ROSE, ['39 °C', '39 °C', '39 °C']],
  ['Air In 1', '28,52 °C', 50, ['32,5', '30,0', '27,5', 0], 87, 87, 2.6, SKY, ['30 °C', '28 °C', '29 °C'], [[167, 74]]],
  ['Air Out 1', '39,20 °C', 50, ['42,5', '40,0', '37,5', 0], 85, 82, .4, ROSE, ['39 °C', '39 °C', '39 °C']],
  ['Air In 2', '24,17 °C', 51, ['27,5', '25,0', '22,5', 0], 86, 84, 1, SEA, ['25 °C', '24 °C', '24 °C']],
  ['Air Out 2', '39,09 °C', 50, ['42,5', '40,0', '37,5', 0], 84, 82, .3, ROSE, ['39 °C', '39 °C', '39 °C']],
  ['In Case', '41,45 °C', 48, ['45,0', '42,5', '40,0', '37,5'], 88, 84, 1.4, RED, ['42 °C', '41 °C', '41 °C'], [[170, 82], [173, 79], [176, 82]]]
];
$('trends').innerHTML = trends.map((t, i) => `<article class="card small">${head(t[0], t[1])}` +
  svg(2, 40, 201, 98, plot({ x0: 44, x1: 199, top: 36, bottom: 131, mx: 82, step: 43.3, g: [82, 131], fill: t[7],
    y: t[3].map((l, k) => [t[2] + 24 * k, l]), pts: series(44, 199, t[4], t[5], t[6], 31 + i * 97, 2, t[9]) })) +
  stats(t[8]) + '</article>').join('');

const pol = (g, r, v) => { const a = (v * 1.2 - 60) * Math.PI / 180; return [(g.cx + r * Math.sin(a)).toFixed(1), (g.cy - r * Math.cos(a)).toFixed(1)]; };
const arc = (g, r, a, b, col, w) => `<path d="M${pol(g, r, a)}A${r} ${r} 0 0 1 ${pol(g, r, b)}" fill="none" stroke="${col}" stroke-width="${w}"/>`;
function dial(g) {
  let s = '';
  g.seg.forEach(q => s += arc(g, g.r, q[0], q[1], q[2], 8));
  for (let v = 0; v <= 100; v += g.minor)
    s += `<path d="M${pol(g, g.r + 5, v)}L${pol(g, g.r + (v % 10 ? 9 : 12), v)}" stroke="#333"/>`;
  for (let v = 0; v <= 100; v += 10) {
    const p = pol(g, g.r + 17, v);
    s += `<text class="tick" text-anchor="middle" transform="translate(${p}) rotate(${v * 1.2 - 60})">${v}</text>`;
  }
  return s;
}
function needle(g, v, cx, cy, id, cut) {
  const a = v * 1.2 - 60;
  return `<clipPath id="${id}"><path d="M0-20H360V${cut}H0z"/></clipPath><g clip-path="url(#${id})"><path transform="translate(${cx} ${cy}) rotate(${a})" d="M-6 0L-1-${g.r - 2}h2L6 0z" fill="red"/></g>`;
}
function gstats(xs, y, a) {
  return [UP, DN, AV].map((p, i) => `<g transform="translate(${xs[i]} ${y - 5})" color="#f22">${p}</g><text class="gstat" x="${xs[i] + 9}" y="${y + 5}">${a[i]}</text>`).join('') +
    `<text class="gstat" x="${xs[3]}" y="${y + 5}">Δᵗ</text><text class="gstat" x="${xs[3] + 17}" y="${y + 5}">15 m</text>`;
}
const cpu = { cx: 177, cy: 204, r: 168, minor: 5, seg: [[0, 30, '#00f'], [30, 50, '#439a00'], [50, 80, '#fff200'], [80, 100, '#f00']] };
const gpu = { cx: 180, cy: 201, r: 165, minor: 5, seg: [[0, 25, '#00f'], [25, 40, '#439a00'], [40, 70, '#fff200'], [70, 90, '#f00'], [90, 100, '#000']] };
const steps = rng(77), gpts = [];
for (let x = 111; x <= 275; x += 3) { const q = steps(); gpts.push([x, q < .22 ? 103 : q > .82 ? 92 : 97.5]); }
gpts.push([275, 103]);
const BLACK = ['#42545c', '#3a3e40', '#393c3d'];
$('quad').innerHTML =
  `<article class="card">${svg(2, 2, 356, 156,
    dial(cpu) + arc(cpu, 160, 69, 85, '#00f', 4) +
    '<text class="big" x="17" y="28">100 %</text><text class="big" x="350" y="28" text-anchor="end">76 °C</text>' +
    '<text class="unit" x="177" y="101" text-anchor="middle">°C</text><text class="unit" x="177" y="122" text-anchor="middle">CPU</text>' +
    needle(cpu, 76, 177, 204, 'n1', 130) +
    plot({ x0: 101, x1: 279, top: 76, bottom: 130, mx: 143, step: 50, g: [84, 132], fill: ['#f63434', '#f5823c'], alpha: .8, w: 1,
      color: '#222', y: [[93, '80'], [124, 0]], pts: series(101, 279, 99, 97, 16, 1234, 2.6, [[109, 91], [124, 84], [168, 81], [184, 86], [197, 84], [221, 84], [245, 84]], 0) }) +
    gstats([75, 125, 177, 233], 147, ['85,0 °C', '69,0 °C', '78,4 °C']))}</article>` +
  `<article class="card">${head('dT W/A', '13,67 °C')}<div class="split">` +
  svg(2, 40, 139, 116, plot({ x0: 38, x1: 140, top: 41, bottom: 149, mx: 64, step: 28, g: [90, 149], fill: BLACK,
    y: [[49, 0], [76, '15,0'], [103, '12,5'], [130, '10,0']], pts: series(38, 140, 93, 90, 1, 55, 1.5, [[120, 99]]) })) +
  stats(['14 °C', '13 °C', '14 °C']) + '</div></article>' +
  `<article class="card">${svg(2, 2, 356, 156,
    dial(gpu) + arc(gpu, 157, 44.500, 48.500, '#00f', 5) +
    '<text class="big" x="17" y="28">100 %</text><text class="big" x="354" y="33" text-anchor="end">47 °C</text>' +
    '<text class="unit" x="180" y="105" text-anchor="middle">°C</text><text class="unit" x="180" y="126" text-anchor="middle">GPU</text>' +
    needle(gpu, 47, 174, 201, 'n2', 135) +
    plot({ x0: 110, x1: 275, top: 72, bottom: 130, mx: 151, step: 45.5, g: [92, 130], fill: ['#f0c23a', '#f1e335'], alpha: .8, w: 1,
      color: '#222', y: [[79, '50'], [109, '45']], pts: gpts }) +
    gstats([82, 130, 178, 230], 147, ['48,0 °C', '45,0 °C', '46,8 °C']))}</article>` +
  `<article class="card">${head('dT W', '2,13 °C')}<div class="split">` +
  svg(2, 40, 148, 116, plot({ x0: 42, x1: 150, top: 36, bottom: 149, base: 116, mx: 68, step: 30.3, g: [90, 116], fill: ['#3b3f40', '#3a3d3e'],
    y: [[59, '5,0'], [88, '2,5'], [116, '0,0'], [144, 0]], pts: series(42, 150, 91, 91, .4, 8, 2) })) +
  stats(['2 °C', '2 °C', '2 °C']) + '</div></article>';

const fan = { cx: 121, cy: 173, r: 102, minor: 2, seg: [[0, 100, '#3f95bd']] };
$('fantop').innerHTML = svg(2, 2, 237, 156, dial(fan) +
  '<text class="big" x="20" y="34">Fan Top</text><text class="big" x="216" y="34" text-anchor="end">716,00 rpm</text>' +
  '<text class="huge" x="121" y="123" text-anchor="middle">%</text>' +
  '<path d="M114 173L87.500 77h.8L122 173z" fill="red"/><circle cx="118" cy="173" r="9.500" fill="red"/>');

$('fanright').innerHTML = head('Fan Right', '726 rpm') +
  svg(2, 40, 326, 203, plot({ x0: 47, x1: 319, top: 41, bottom: 236, mx: 52, step: 30.3, n: 9, sub: 2, g: [141, 236], fill: ['#5d8ca2', '#3b3e3f'],
    color: '#222', y: [[41, 0], [73, '1 250'], [105, '1 000'], [138, '750'], [171, '500'], [203, '250'], [236, 0]], pts: [[47, 141], [319, 141]] })) +
  stats(['728 rpm', '726 rpm', '727 rpm']) +
  '<div class="readout"><span>36 %</span><span>11,9 V</span><span>0,0 W</span><span>32 °C</span></div>';

const Y = '#e4e044', O = '#f07a42';
const ladder = (y, step, v, dv) => { const r = []; for (; v > 0; y += step, v -= dv) r.push([Math.round(y), v]); r.push([291, 0]); return r; };
const r3 = rng(4242), gp = [];
for (let x = 36; x <= 209; x += 2.6) gp.push([x, r3() < .5 ? 36 + r3() * 26 : 74 + r3() * 24]);
gp.push([209, 88]);
const pw = [
  ['Power Out', '347,0 W', ladder(50, 34.4, 350, 50), series(36, 209, 50, 50, 7, 99, 2.5, [[73, 40]], .6), [Y, Y, '#e7b945', O], [100, 291], ['372 W', '325 W', '349 W']],
  ['CPU', '132,0 W', ladder(67, 32, 175, 25), series(36, 209, 123, 121, 2.4, 11, 2.2), ['#e7d244', '#e8a945', O], [120, 291], ['136 W', '128 W', '132 W']],
  ['GPU', '203,2 W', ladder(78, 53.2, 200, 50), gp, [Y, '#e7a945', O], [138, 291], ['240 W', '170 W', '210 W']]
];
$('power').innerHTML = pw.map(p => `<article class="card tall-card">${head(p[0], p[1])}` +
  svg(2, 40, 211, 258, plot({ x0: 35, x1: 209, top: 36, bottom: 291, mx: 77.5, step: 48.5, g: p[5], fill: p[4], color: '#ff5540', w: 2, y: p[2], pts: p[3] })) +
  stats(p[6]) + '</article>').join('');

// Stress test scopes
function grid(x0, x1, fx, y0, y1, fy, dy) {
  let d = '';
  for (let x = fx; x < x1; x += 10) d += `M${x + .5} ${y0}V${y1}`;
  for (let y = fy; y <= y1; y += dy) d += `M${x0} ${y + .5}H${x1}`;
  return `<path d="${d}" stroke="#008a00" fill="none"/>`;
}
const line = (pts, col) => `<polyline points="${pts.map(p => p.map(v => v.toFixed(1))).join(' ')}" fill="none" stroke="${col}"/>`;
const txt = (x, y, t, col, a = 'start') => `<text x="${x}" y="${y}" fill="${col}" text-anchor="${a}">${t}</text>`;
$('temps').innerHTML = grid(75, 510, 84, 8, 58, 8, 5) +
  line(series(77, 510, 23, 23, 5, 5, 3, [], 0), '#0f0') + line(series(77, 510, 22, 22, 6, 1500, 3, [], 0), '#f3f') +
  line(series(77, 510, 23, 23, 6, 2577, 3, [], 0), '#0ff') + line(series(77, 510, 22, 22, 6, 3599, 3, [], 0), '#dfe8df') +
  line([[77, 32.5], [510, 32.5]], '#ffc880') + line([[77, 39.5], [510, 39.5]], '#ff0') +
  txt(69, 15, '100 °C', '#fff', 'end') + txt(69, 64, '0 °C', '#fff', 'end') +
  txt(514, 28, '75', '#0f0') + txt(535, 29, '74', '#f3f') + txt(535, 31, '68', '#dfe8df') + txt(535, 35, '69', '#0ff') + txt(535, 40, '52', '#ffc880') + txt(514, 47, '37', '#ff0');
$('usage').innerHTML = grid(75, 550, 83, 45, 129, 49, 8) + line([[76, 45], [550, 45]], '#ff0') + line([[76, 129.5], [550, 129.5]], '#0f0') +
  txt(213, 29, 'CPU Usage', '#ff0') + txt(296, 29, '|', '#fff') + txt(310, 29, 'CPU Throttling', '#0f0') +
  txt(69, 52, '100%', '#fff', 'end') + txt(69, 136, '0%', '#fff', 'end') + txt(555, 52, '100%', '#ff0') + txt(555, 136, '0%', '#0f0');
```
